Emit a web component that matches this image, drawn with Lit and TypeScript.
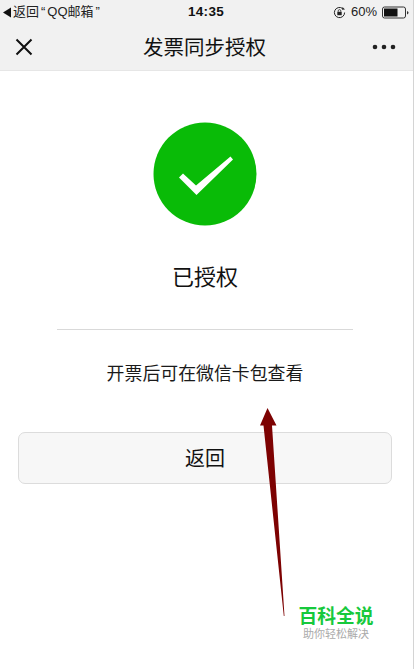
import { LitElement, html, css } from "lit";
import { customElement } from "lit/decorators.js";

@customElement("app-root")
export class AppRoot extends LitElement {
  static styles = css`
    :host {
      display: block;
      position: relative;
      width: 414px;
      height: 669px;
      overflow: hidden;
      background: #fff;
      color: #111;
      font-family: "Noto Sans CJK SC", "Liberation Sans", sans-serif;
    }
    .top {
      background: #f1f1f1;
      height: 70px;
      border-bottom: 1px solid #e6e6e6;
      box-sizing: content-box;
    }
    .status {
      height: 24px;
      display: grid;
      grid-template-columns: 1fr auto 1fr;
      align-items: center;
      padding: 0 5px 0 3px;
      font-size: 13px;
      font-family: "Liberation Sans", "Noto Sans CJK SC", sans-serif;
      line-height: 20px;
    }
    .back { display: flex; align-items: center; gap: 1px; font-size: 13px; color: #222; }
    .q { padding: 0 2px; }
    .time { font-weight: 700; font-size: 13.5px; letter-spacing: 0.3px; }
    .right { display: flex; justify-content: flex-end; align-items: center; gap: 5px; color: #222; }
    .nav {
      height: 46px;
      display: grid;
      grid-template-columns: 48px 1fr 48px;
      align-items: center;
    }
    .nav svg { display: block; }
    .close { padding-left: 15px; }
    .more { padding-left: 6px; }
    .title { text-align: center; font-size: 20.5px; line-height: 28px; margin-top: -2px; padding-right: 5px; }
    .main {
      display: flex;
      flex-direction: column;
      align-items: center;
    }
    .tick { display: block; margin-top: 51px; margin-left: -4px; }
    .state { font-size: 22px; line-height: 30px; margin-top: 34px; margin-left: -4px; }
    .rule { width: 296px; height: 1px; background: #d9d9d9; margin-top: 39px; margin-left: -4px; }
    .note { font-size: 17.9px; line-height: 26px; margin-top: 29px; margin-left: -4px; color: #1a1a1a; }
    .btn {
      width: 374px;
      height: 52px;
      box-sizing: border-box;
      margin-top: 47px;
      margin-left: -4px;
      padding-bottom: 2px;
      background: #f7f7f7;
      border: 1px solid #dcdcdc;
      border-radius: 7px;
      display: flex;
      align-items: center;
      justify-content: center;
      font-size: 20px;
      color: #111;
    }
    .arrow { position: absolute; left: 250px; top: 400px; }
    .mark {
      position: absolute;
      left: 298px;
      top: 604px;
      width: 76px;
      display: flex;
      flex-direction: column;
      align-items: center;
    }
    .mark b { font-size: 18.8px; line-height: 21px; font-weight: 700; color: #17c93c; white-space: nowrap; }
    .mark span { font-size: 11px; line-height: 12px; color: #aaa; white-space: nowrap; margin-top: 2px; }
    .edge { position: absolute; right: 0; top: 0; bottom: 0; width: 1px; background: #d4d4d4; }
  `;

  render() {
    return html`
      <div class="top">
        <div class="status">
          <div class="back">
            <svg width="9" height="11" viewBox="0 0 9 11"><path d="M8 0.5V10.5L0 5.5Z" fill="#111" /></svg>
            <span>返回<span class="q">“</span>QQ邮箱<span class="q">”</span></span>
          </div>
          <div class="time">14:35</div>
          <div class="right">
            <svg width="13" height="13" viewBox="0 0 13 13" fill="none" stroke="#222">
              <path d="M11.600 6.500A5.100 5.100 0 1 1 9.600 2.500" stroke-width="1" />
              <path d="M9.500 1L12 3.400L9 3.800Z" fill="#222" stroke="none" />
              <rect x="4.300" y="5.800" width="4.400" height="3.400" fill="#222" stroke="none" />
              <path d="M5.200 5.800V4.900A1.300 1.300 0 0 1 7.800 4.900V5.800" stroke-width="0.8" />
            </svg>
            <span>60%</span>
            <svg width="27" height="13" viewBox="0 0 27 13">
              <rect x="0.500" y="1" width="23" height="11" rx="2" fill="none" stroke="#333" />
              <rect x="2" y="2.500" width="13.500" height="8" fill="#111" />
              <path d="M25 5V8.500Q26.500 8 26.500 6.700Q26.500 5.500 25 5Z" fill="#333" />
            </svg>
          </div>
        </div>
        <div class="nav">
          <div class="close">
            <svg width="18" height="18" viewBox="0 0 18 18"><path d="M1.500 1.500L16.500 16.500M16.500 1.500L1.500 16.500" stroke="#111" stroke-width="2" fill="none" /></svg>
          </div>
          <div class="title">发票同步授权</div>
          <div class="more">
            <svg width="24" height="6" viewBox="0 0 24 6"><circle cx="3" cy="3" r="2.300" fill="#222" /><circle cx="12" cy="3" r="2.300" fill="#222" /><circle cx="21" cy="3" r="2.300" fill="#222" /></svg>
          </div>
        </div>
      </div>
      <div class="main">
        <svg class="tick" width="104" height="104" viewBox="0 0 104 104">
          <circle cx="52" cy="52" r="51.500" fill="#09bb07" />
          <path d="M26 55.500L30 51.500L43 63.500L77.500 34.500L80 37.500L43.500 73Z" fill="#fff" />
        </svg>
        <div class="state">已授权</div>
        <div class="rule"></div>
        <div class="note">开票后可在微信卡包查看</div>
        <div class="btn">返回</div>
      </div>
      <svg class="arrow" width="40" height="220" viewBox="0 0 40 220">
        <path d="M17.500 8L26.500 25.500H22L34.500 216H33.800L13.500 25.500H10Z" fill="#7d0202" />
      </svg>
      <div class="mark">
        <b>百科全说</b>
        <span>助你轻松解决</span>
      </div>
      <div class="edge"></div>
    `;
  }
}
